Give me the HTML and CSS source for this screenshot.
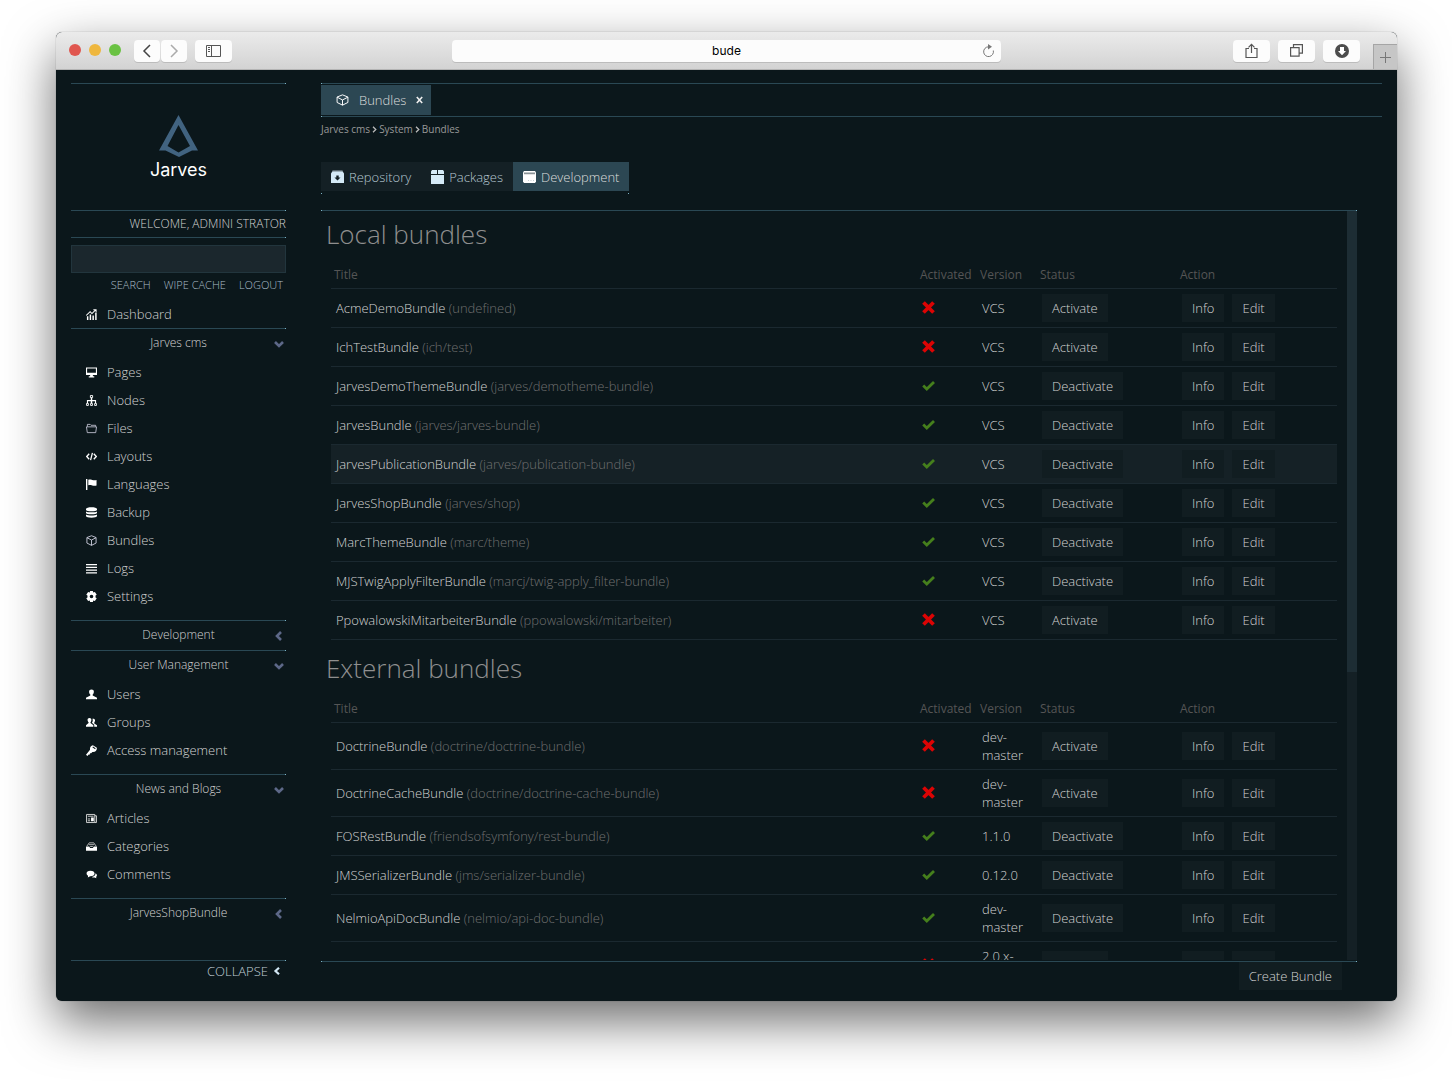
FILE: index.html
```html
<!DOCTYPE html>
<html lang="en">
<head>
<meta charset="utf-8">
<title>Bundles - Jarves cms</title>
<link rel="stylesheet" href="styles.css">
</head>
<body>
<div class="window">
  <header class="chrome">
    <div class="lights"><span class="light red"></span><span class="light yellow"></span><span class="light green"></span></div>
    <div class="history">
      <button class="tool narrow" aria-label="Back"><svg width="10" height="14" viewBox="0 0 10 14"><path d="M8 1 2 7l6 6" fill="none" stroke="#444" stroke-width="1.5"/></svg></button>
      <button class="tool narrow" aria-label="Forward"><svg width="10" height="14" viewBox="0 0 10 14"><path d="M2 1l6 6-6 6" fill="none" stroke="#aaa" stroke-width="1.5"/></svg></button>
    </div>
    <button class="tool" aria-label="Sidebar"><svg width="15" height="12" viewBox="0 0 15 12"><path d="M.5.5h14v11H.5zM5.500.5v11M2 2.500h2M2 4.500h2M2 6.500h2" fill="none" stroke="#555"/></svg></button>
    <div class="address">
      <input type="text" value="bude" aria-label="Address">
      <button class="reload" aria-label="Reload"><svg width="13" height="14" viewBox="0 0 13 14"><path d="M6.500 2.800A4.900 4.900 0 1 0 11.300 6.500" fill="none" stroke="#777"/><path d="M6 0 10 2.700 6 5.400z" fill="#777"/></svg></button>
    </div>
    <div class="tools">
      <button class="tool" aria-label="Share"><svg width="13" height="16" viewBox="0 0 13 16"><path d="M4 5.500H1v9h11v-9H9M6.500 10V1.500M3.500 4.300l3-3 3 3" fill="none" stroke="#555" stroke-width="1.200"/></svg></button>
      <button class="tool" aria-label="Tabs"><svg width="13" height="13" viewBox="0 0 13 13"><path d="M.6 3.600h8.500v8.500H.6zM3.500 3.500V.6h8.900v8.500H9.200" fill="none" stroke="#555" stroke-width="1.200"/></svg></button>
      <button class="tool" aria-label="Downloads"><svg width="14" height="14" viewBox="0 0 14 14"><circle cx="7" cy="7" r="7" fill="#4c4c4c"/><path d="M5 3h4v4h2l-4 4.200L3 7h2z" fill="#fff"/></svg></button>
    </div>
    <button class="newtab" aria-label="New tab"><svg width="11" height="11" viewBox="0 0 11 11"><path d="M5.500 0v11M0 5.500h11" stroke="#777"/></svg></button>
  </header>

  <div class="app">
    <aside class="sidebar">
      <div class="logo">
        <svg width="39" height="42" viewBox="0 0 39 42"><path fill="#416380" fill-rule="evenodd" d="M19.500 0 39 35.500h-6L20 42 6.500 35.500H0zM19.500 10 8.500 31 19.500 37.500 31 31z"/></svg>
        <span>Jarves</span>
      </div>
      <p class="welcome">Welcome, Admini Strator</p>
      <input class="search" type="search" aria-label="Search">
      <div class="quick"><a href="#">Search</a><a href="#">Wipe cache</a><a href="#">Logout</a></div>
      <nav>
        <ul>
          <li><a href="#"><svg class="ico" viewBox="0 0 12 12"><path d="M1 8h1.600v4H1zM4 6h1.600v6H4zM7 7h1.600v5H7zM10 4h1.600v8H10z"/><path d="M.3 7 4.500 3l2 2L10.500 1M8 .8h3v3" fill="none" stroke="#fff" stroke-width="1.100"/></svg>Dashboard</a></li>
        </ul>
        <section>
          <h2><button>Jarves cms<svg class="chev" viewBox="0 0 10 10"><path d="M1 3l4 4 4-4"/></svg></button></h2>
          <ul>
            <li><a href="#"><svg class="ico" viewBox="0 0 12 12"><path fill-rule="evenodd" d="M0 .5h12v8.200H7.500V10H9v1.500H3V10h1.500V8.700H0zM1.200 1.700v4.500h9.600V1.700z"/></svg>Pages</a></li>
            <li><a href="#"><svg class="ico" viewBox="0 0 12 12"><path d="M5.200 3h1.600v2.500H11V9H9.800V6.700H6.800V9H5.200V6.700H2.200V9H1V5.500h4.200z"/><path d="M4.800.5h2.400v2.300H4.800zM.6 9.200h2v2.200h-2zM5 9.200h2v2.200H5zM9.400 9.200h2v2.200h-2z" fill="none" stroke="#fff" stroke-width="1"/></svg>Nodes</a></li>
            <li><a href="#"><svg class="ico" viewBox="0 0 12 12"><path d="M1.500 4V1.500h3l1 1h5V4M.5 4.200h11l-.9 6.300H1.400z" fill="none" stroke="#ccd" stroke-width=".9"/></svg>Files</a></li>
            <li><a href="#"><svg class="ico" viewBox="0 0 12 12"><path d="M3.500 3 .8 6l2.700 3M8.500 3l2.700 3-2.700 3M7 2 5 10" fill="none" stroke="#fff" stroke-width="1.400"/></svg>Layouts</a></li>
            <li><a href="#"><svg class="ico" viewBox="0 0 12 12"><path d="M0 0h1.500v12H0zM2.500.8c3-1 5 1.200 9 .4v6c-4 .8-6-1.400-9-.4z"/></svg>Languages</a></li>
            <li><a href="#"><svg class="ico" viewBox="0 0 12 12"><path d="M0 2.200C0-.2 12-.2 12 2.200v1C12 5 0 5 0 3.200zM0 4.800c2 1.400 10 1.400 12 0v1.700c0 1.900-12 1.900-12 0zM0 8.200c2 1.400 10 1.400 12 0v1.600c0 2.400-12 2.400-12 0z"/></svg>Backup</a></li>
            <li><a href="#"><svg class="ico" viewBox="0 0 12 12"><path d="M6 .8l5 2v6L6 11.300 1 8.800v-6zM1 2.900l5 2.600 5-2.600M6 5.500v5.800" fill="none" stroke="#dde" stroke-width=".9"/></svg>Bundles</a></li>
            <li><a href="#"><svg class="ico" viewBox="0 0 12 12"><path d="M0 1h12v1.500H0zM0 4h12v1.500H0zM0 7h12v1.500H0zM0 10h12v1.500H0z"/></svg>Logs</a></li>
            <li><a href="#"><svg class="ico" viewBox="0 0 12 12"><path fill-rule="evenodd" d="M4.500 0h3l.4 1.700 1.800-.5 2 2.800L10.400 5v2l1.300 1-2 2.800-1.800-.5-.4 1.700h-3l-.4-1.700-1.800.5L.3 8l1.300-1V5L.3 4l2-2.800 1.800.5zM6 4a2 2 0 1 0 0 4 2 2 0 0 0 0-4z"/></svg>Settings</a></li>
          </ul>
        </section>
        <section>
          <h2><button>Development<svg class="chev" viewBox="0 0 10 10"><path d="M7 1 3 5l4 4"/></svg></button></h2>
        </section>
        <section>
          <h2><button>User Management<svg class="chev" viewBox="0 0 10 10"><path d="M1 3l4 4 4-4"/></svg></button></h2>
          <ul>
            <li><a href="#"><svg class="ico" viewBox="0 0 12 12"><path d="M6 .5c3.500 0 3 4 1.300 5.500v1.200L12 9.500v1.700H0V9.500l4.700-2.300V6C3 4.500 2.500.5 6 .5z"/></svg>Users</a></li>
            <li><a href="#"><svg class="ico" viewBox="0 0 12 12"><path d="M3.800 1c2.800 0 2.400 3.300 1.100 4.600v1L8 9v1.700H0V9l2.800-2.400v-1C1.400 4.300 1 1 3.800 1zM7 2c3-.8 3.600 2.200 2 4v1l3 2v1.700H9V8.500L6.500 6.300C7.500 5 7.700 3.400 7 2z"/></svg>Groups</a></li>
            <li><a href="#"><svg class="ico" viewBox="0 0 12 12"><path fill-rule="evenodd" d="M7.500.3 11.800 3c.4 2.500-1.400 5-4.800 4.600L5.600 9H4.300v1.300H3L1.500 12 0 10.700l4.400-5.500C4 2.700 5.300.8 7.500.3zM7.700 1.600l-.8.900 3 2 .6-1z"/></svg>Access management</a></li>
          </ul>
        </section>
        <section>
          <h2><button>News and Blogs<svg class="chev" viewBox="0 0 10 10"><path d="M1 3l4 4 4-4"/></svg></button></h2>
          <ul>
            <li><a href="#"><svg class="ico" viewBox="0 0 12 12"><path d="M.6 1.600h9v8.800h-9zM9.600 3h1.800v7.400H9.600M2 3.500h6.300M2 8.500h2.500M2 6.500h2.500" fill="none" stroke="#ddd"/><path d="M5.500 5h3v4h-3z"/></svg>Articles</a></li>
            <li><a href="#"><svg class="ico" viewBox="0 0 12 12"><path d="M0 6h3.500l1 1.500h3l1-1.500H12v4.500H0z"/><path d="M1 5.500 3.500 2h5L11 5.500M3 4h6M4.500 6h3" fill="none" stroke="#bbb"/></svg>Categories</a></li>
            <li><a href="#"><svg class="ico" viewBox="0 0 12 12"><path d="M4.800 2C11 2 10.800 8.200 4.500 8L2 9.300l.3-2C-.7 5.500.4 2 4.800 2zM10.300 4.500C12.400 5.500 12.300 7.500 11 8.500l.3 1.700L9.300 9.300C8 9.400 7 9.200 6.300 8.700 9 8.200 10.500 6.800 10.300 4.500z"/></svg>Comments</a></li>
          </ul>
        </section>
        <section>
          <h2><button>JarvesShopBundle<svg class="chev" viewBox="0 0 10 10"><path d="M7 1 3 5l4 4"/></svg></button></h2>
        </section>
      </nav>
      <button class="collapse">Collapse<svg viewBox="0 0 8 8"><path d="M6 .8 2.500 4 6 7.200" fill="none" stroke="#d3e8f5" stroke-width="2.200"/></svg></button>
    </aside>

    <main class="main">
      <div class="tabs">
        <div class="tab"><svg width="13" height="13" viewBox="0 0 12 12"><path d="M6 .8l5 2v5L6 10.300 1 7.800v-5zM1 2.900l5 2.600 5-2.600M6 5.500v4.800" fill="none" stroke="#fff" stroke-width=".9"/></svg><a href="#">Bundles</a><button aria-label="Close tab"><svg width="7" height="8" viewBox="0 0 7 8"><path d="M.8 1l5.400 6M6.200 1L.8 7" stroke="#eee" stroke-width="1.600"/></svg></button></div>
      </div>
      <div class="crumbs"><a href="#">Jarves cms</a><svg viewBox="0 0 5 7"><path d="M1 .8 3.800 3.500 1 6.200"/></svg><a href="#">System</a><svg viewBox="0 0 5 7"><path d="M1 .8 3.800 3.500 1 6.200"/></svg><a href="#">Bundles</a></div>
      <div class="switch">
        <button><svg viewBox="0 0 13 14"><path d="M1.500.5h10l.7 2H.8z" fill="#9fb0ba"/><path fill-rule="evenodd" d="M0 3.500 1 2h11l1 1.500V13H0zM5.300 5.500v2H3.500l3 3 3-3H7.700v-2z" fill="#d5eaf7"/></svg>Repository</button>
        <button><svg viewBox="0 0 13 14"><path d="M1 0h5v4H0V1.500zM7 0h5l1 1.500V4H7zM0 5h13v9H0z" fill="#d5eaf7"/></svg>Packages</button>
        <button class="on"><svg viewBox="0 0 13 14"><path d="M1 1h11l1 1.500v9L12 13H1l-1-1.500v-9z" fill="#fff"/><path d="M1 2.500h11v1.800H1z" fill="#8a9397"/><path d="M5 10h1v1H5zM7.500 10h1v1h-1zM10 10h1v1h-1z" fill="#c4cdd2"/></svg>Development</button>
      </div>
      <div class="panel">
        <div class="scroll">
          <h1>Local bundles</h1>
          <table>
            <thead><tr><th>Title</th><th class="c-act">Activated</th><th class="c-ver">Version</th><th class="c-sta">Status</th><th class="c-do">Action</th></tr></thead>
            <tbody id="local"></tbody>
          </table>
          <h1 class="next">External bundles</h1>
          <table>
            <thead><tr><th>Title</th><th class="c-act">Activated</th><th class="c-ver">Version</th><th class="c-sta">Status</th><th class="c-do">Action</th></tr></thead>
            <tbody id="external"></tbody>
          </table>
        </div>
        <div class="track"><div class="thumb"></div></div>
      </div>
      <footer><button class="btn">Create Bundle</button></footer>
    </main>
  </div>
</div>
<script src="bundles.js"></script>
</body>
</html>
```
FILE: bundles.js
```js
// name, package, active, version
const local = [
  ['AcmeDemoBundle', 'undefined', 0, 'VCS'],
  ['IchTestBundle', 'ich/test', 0, 'VCS'],
  ['JarvesDemoThemeBundle', 'jarves/demotheme-bundle', 1, 'VCS'],
  ['JarvesBundle', 'jarves/jarves-bundle', 1, 'VCS'],
  ['JarvesPublicationBundle', 'jarves/publication-bundle', 1, 'VCS', 'hover'],
  ['JarvesShopBundle', 'jarves/shop', 1, 'VCS'],
  ['MarcThemeBundle', 'marc/theme', 1, 'VCS'],
  ['MJSTwigApplyFilterBundle', 'marcj/twig-apply_filter-bundle', 1, 'VCS'],
  ['PpowalowskiMitarbeiterBundle', 'ppowalowski/mitarbeiter', 0, 'VCS'],
];
const external = [
  ['DoctrineBundle', 'doctrine/doctrine-bundle', 0, 'dev-master'],
  ['DoctrineCacheBundle', 'doctrine/doctrine-cache-bundle', 0, 'dev-master'],
  ['FOSRestBundle', 'friendsofsymfony/rest-bundle', 1, '1.1.0'],
  ['JMSSerializerBundle', 'jms/serializer-bundle', 1, '0.12.0'],
  ['NelmioApiDocBundle', 'nelmio/api-doc-bundle', 1, 'dev-master'],
  ['', '', 0, '2.0.x-dev'],
];
const yes = '<svg class="mark" viewBox="0 0 13 13"><path d="M1.200 6.500 4.800 10 12 3" fill="none" stroke="#457f1c" stroke-width="2.800"/></svg>';
const no = '<svg class="mark" viewBox="0 0 13 13"><path d="M1.500 1.500l10 10M11.500 1.500l-10 10" fill="none" stroke="#dc0404" stroke-width="3.800"/></svg>';
function row([name, pack, active, version, cls]) {
  const title = name ? `${name} <span class="pack">(${pack})</span>` : '';
  return `<tr class="${cls || ''}"><td>${title}</td><td class="state">${active ? yes : no}</td><td>${version}</td>` +
    `<td><button class="btn">${active ? 'Deactivate' : 'Activate'}</button></td>` +
    `<td><div class="pair"><button class="btn">Info</button><button class="btn">Edit</button></div></td></tr>`;
}
document.getElementById('local').innerHTML = local.map(row).join('');
document.getElementById('external').innerHTML = external.map(row).join('');
```
FILE: styles.css
```css
* { box-sizing: border-box; }
:root {
  --line-right: linear-gradient(90deg, #2a4854 calc(100% - 2px), #7db4c6 0) 1;
  --line-left: linear-gradient(90deg, #7db4c6 2px, #2a4854 0) 1;
  --line-both: linear-gradient(90deg, #7db4c6 2px, #2a4854 0, #2a4854 calc(100% - 2px), #7db4c6 0) 1;
  --dots: linear-gradient(90deg, #7db4c6 2px, transparent 0, transparent calc(100% - 2px), #7db4c6 0) 1;
}
body {
  margin: 0;
  height: 100vh;
  padding: 32px 56px 80px;
  background: #fff;
  font: 300 13px/18px "Open Sans", sans-serif;
  color: #d2d2d2;
  overflow: hidden;
}
button, input { font: inherit; color: inherit; border: 0; padding: 0; background: none; }
a { color: inherit; text-decoration: none; }
ul { list-style: none; margin: 0; padding: 0; }
svg { flex: none; display: block; }

.window {
  height: 100%;
  display: flex;
  flex-direction: column;
  border-radius: 6px;
  overflow: hidden;
  background: #0b171b;
  box-shadow: 0 0 1px rgba(0,0,0,.5), 0 20px 50px rgba(0,0,0,.58);
}

/* browser bar */
.chrome {
  flex: none;
  height: 38px;
  display: flex;
  align-items: center;
  padding-left: 13px;
  background: linear-gradient(#ebebeb, #d3d3d3);
  border-bottom: 1px solid #b4b4b4;
  position: relative;
}
.lights { display: flex; gap: 8px; margin-right: 13px; padding-bottom: 1px; }
.light { width: 12px; height: 12px; border-radius: 50%; }
.red { background: #e0564f; }
.yellow { background: #efb73e; }
.green { background: #6ac243; }
.history { display: flex; gap: 1px; margin-right: 8px; }
.tool {
  width: 37px; height: 22px;
  display: flex; align-items: center; justify-content: center;
  background: #fcfcfc;
  border-radius: 4px;
  box-shadow: 0 1px 0 #bcbcbc;
}
.narrow { width: 26px; }
.address {
  position: absolute;
  left: 0; right: 0;
  width: 41%;
  margin: 0 auto;
}
.address input {
  width: 100%; height: 22px;
  display: block;
  text-align: center;
  background: #fcfcfc;
  border-radius: 4px;
  box-shadow: 0 1px 0 #bcbcbc;
  font: 400 12px/22px Inter, sans-serif;
  color: #000;
}
.reload { position: absolute; right: 6px; top: 4px; }
.tools { display: flex; gap: 8px; margin-left: auto; margin-right: 13px; }
.newtab {
  width: 24px; height: 25px;
  align-self: flex-end;
  display: flex; align-items: center; justify-content: center;
  background: #c6c6c6;
  border: solid #a5a5a5;
  border-width: 1px 0 0 1px;
}

.app { flex: 1; min-height: 0; display: flex; gap: 35px; padding: 13px 15px 11px; }

/* sidebar */
.sidebar { width: 215px; flex: none; display: flex; flex-direction: column; border: 0 solid; border-top-width: 1px; border-image: var(--line-right); }
.logo { height: 126px; padding-top: 31px; display: flex; flex-direction: column; align-items: center; }
.logo span { font: 400 18px/26px Inter, sans-serif; color: #fff; }
.welcome {
  margin: 0 0 7px;
  height: 28px;
  line-height: 26px;
  border: solid;
  border-width: 1px 0;
  border-image: var(--line-right);
  text-align: right;
  text-transform: uppercase;
  font-size: 12px;
}
.search { flex: none; width: 100%; height: 28px; background: #1b272d; border: 1px solid #22353d; border-radius: 0; }
.quick {
  display: flex; justify-content: flex-end; gap: 13px;
  padding: 3px 3px 6px 0;
  font-size: 11px;
  text-transform: uppercase;
  color: #a9bcc7;
}
li a { display: flex; align-items: center; height: 28px; padding-left: 15px; gap: 10px; }
.ico { width: 11px; height: 11px; fill: #fff; }
section { border: 0 solid; border-top-width: 1px; border-image: var(--line-right); }
section ul { padding-bottom: 10px; }
h2 { margin: 0; font: inherit; font-size: 12px; }
h2 button { width: 100%; height: 29px; padding-bottom: 2px; display: flex; align-items: center; justify-content: center; position: relative; }
.chev { width: 10px; height: 10px; position: absolute; right: 2px; top: 10px; }
.chev path { fill: none; stroke: #5d6888; stroke-width: 2.600; }
.collapse {
  margin-top: auto;
  height: 30px;
  padding: 1px 5px 0 0;
  border: 0 solid;
  border-top-width: 1px;
  border-image: var(--line-right);
  display: flex; justify-content: flex-end; align-items: flex-start; gap: 5px;
  text-transform: uppercase;
  color: #c0ced6;
}
.collapse svg { width: 8px; height: 8px; margin-top: 5px; }

/* main column */
.main { flex: 1; min-width: 0; display: flex; flex-direction: column; }
.tabs { height: 34px; border: solid; border-width: 1px 0; border-image: var(--line-left); padding: 1px 0; display: flex; }
.tab { height: 30px; display: flex; align-items: center; padding: 0 8px 0 15px; background: #2c4753; color: #ddd; }
.tab a { margin: 0 10px; }
.crumbs { display: flex; align-items: center; gap: 2px; height: 14px; margin-top: 5px; font-size: 10px; font-weight: 400; color: #999; }
.crumbs svg { width: 5px; height: 7px; }
.crumbs path { fill: none; stroke: #bbb; stroke-width: 1.300; }
.switch { display: flex; align-self: flex-start; margin: 26px 0 16px; padding-bottom: 2px; border: 0 solid; border-bottom-width: 1px; border-image: var(--dots); }
.switch button { height: 29px; padding: 0 10px; display: flex; align-items: center; gap: 5px; color: #b6c8d2; background: #142025; }
.switch svg { width: 13px; height: 14px; }
.switch .on { background: #2c4753; color: #ddd; }

.panel { flex: 1; min-height: 0; margin-right: 25px; padding-bottom: 1px; display: flex; border: solid; border-width: 1px 0; border-image: var(--line-both); }
.scroll { flex: 1; min-width: 0; padding: 0 10px 10px; overflow-y: auto; scrollbar-width: none; }
.track { width: 10px; background: #142025; }
.thumb { height: 61.5%; background: #1d2d34; }
h1 { margin: 0 0 0 -5px; padding: 5px 0 12px; font: 300 26px/36px "Open Sans", sans-serif; color: #8f8f8f; }
.next { padding-top: 10px; }
table { width: 100%; table-layout: fixed; border-collapse: separate; border-spacing: 0; }
th { text-align: left; font-weight: 400; font-size: 12px; color: #555; height: 25px; padding: 0 3px 2px; border-bottom: 1px solid #1b2930; }
td { padding: 5px; border-bottom: 1px solid #1b2930; vertical-align: middle; }
.state { padding: 4px 5px 6px; }
.c-act, .c-ver { width: 60px; }
.c-sta { width: 140px; }
.c-do { width: 160px; }
.hover td { background: #152126; }
.pack { color: #707070; }
.mark { width: 13px; height: 13px; }
.btn { display: block; height: 28px; padding: 0 10px; background: #111d21; }
.pair { display: flex; gap: 8px; }
footer { display: flex; justify-content: flex-end; padding-right: 40px; }
```
